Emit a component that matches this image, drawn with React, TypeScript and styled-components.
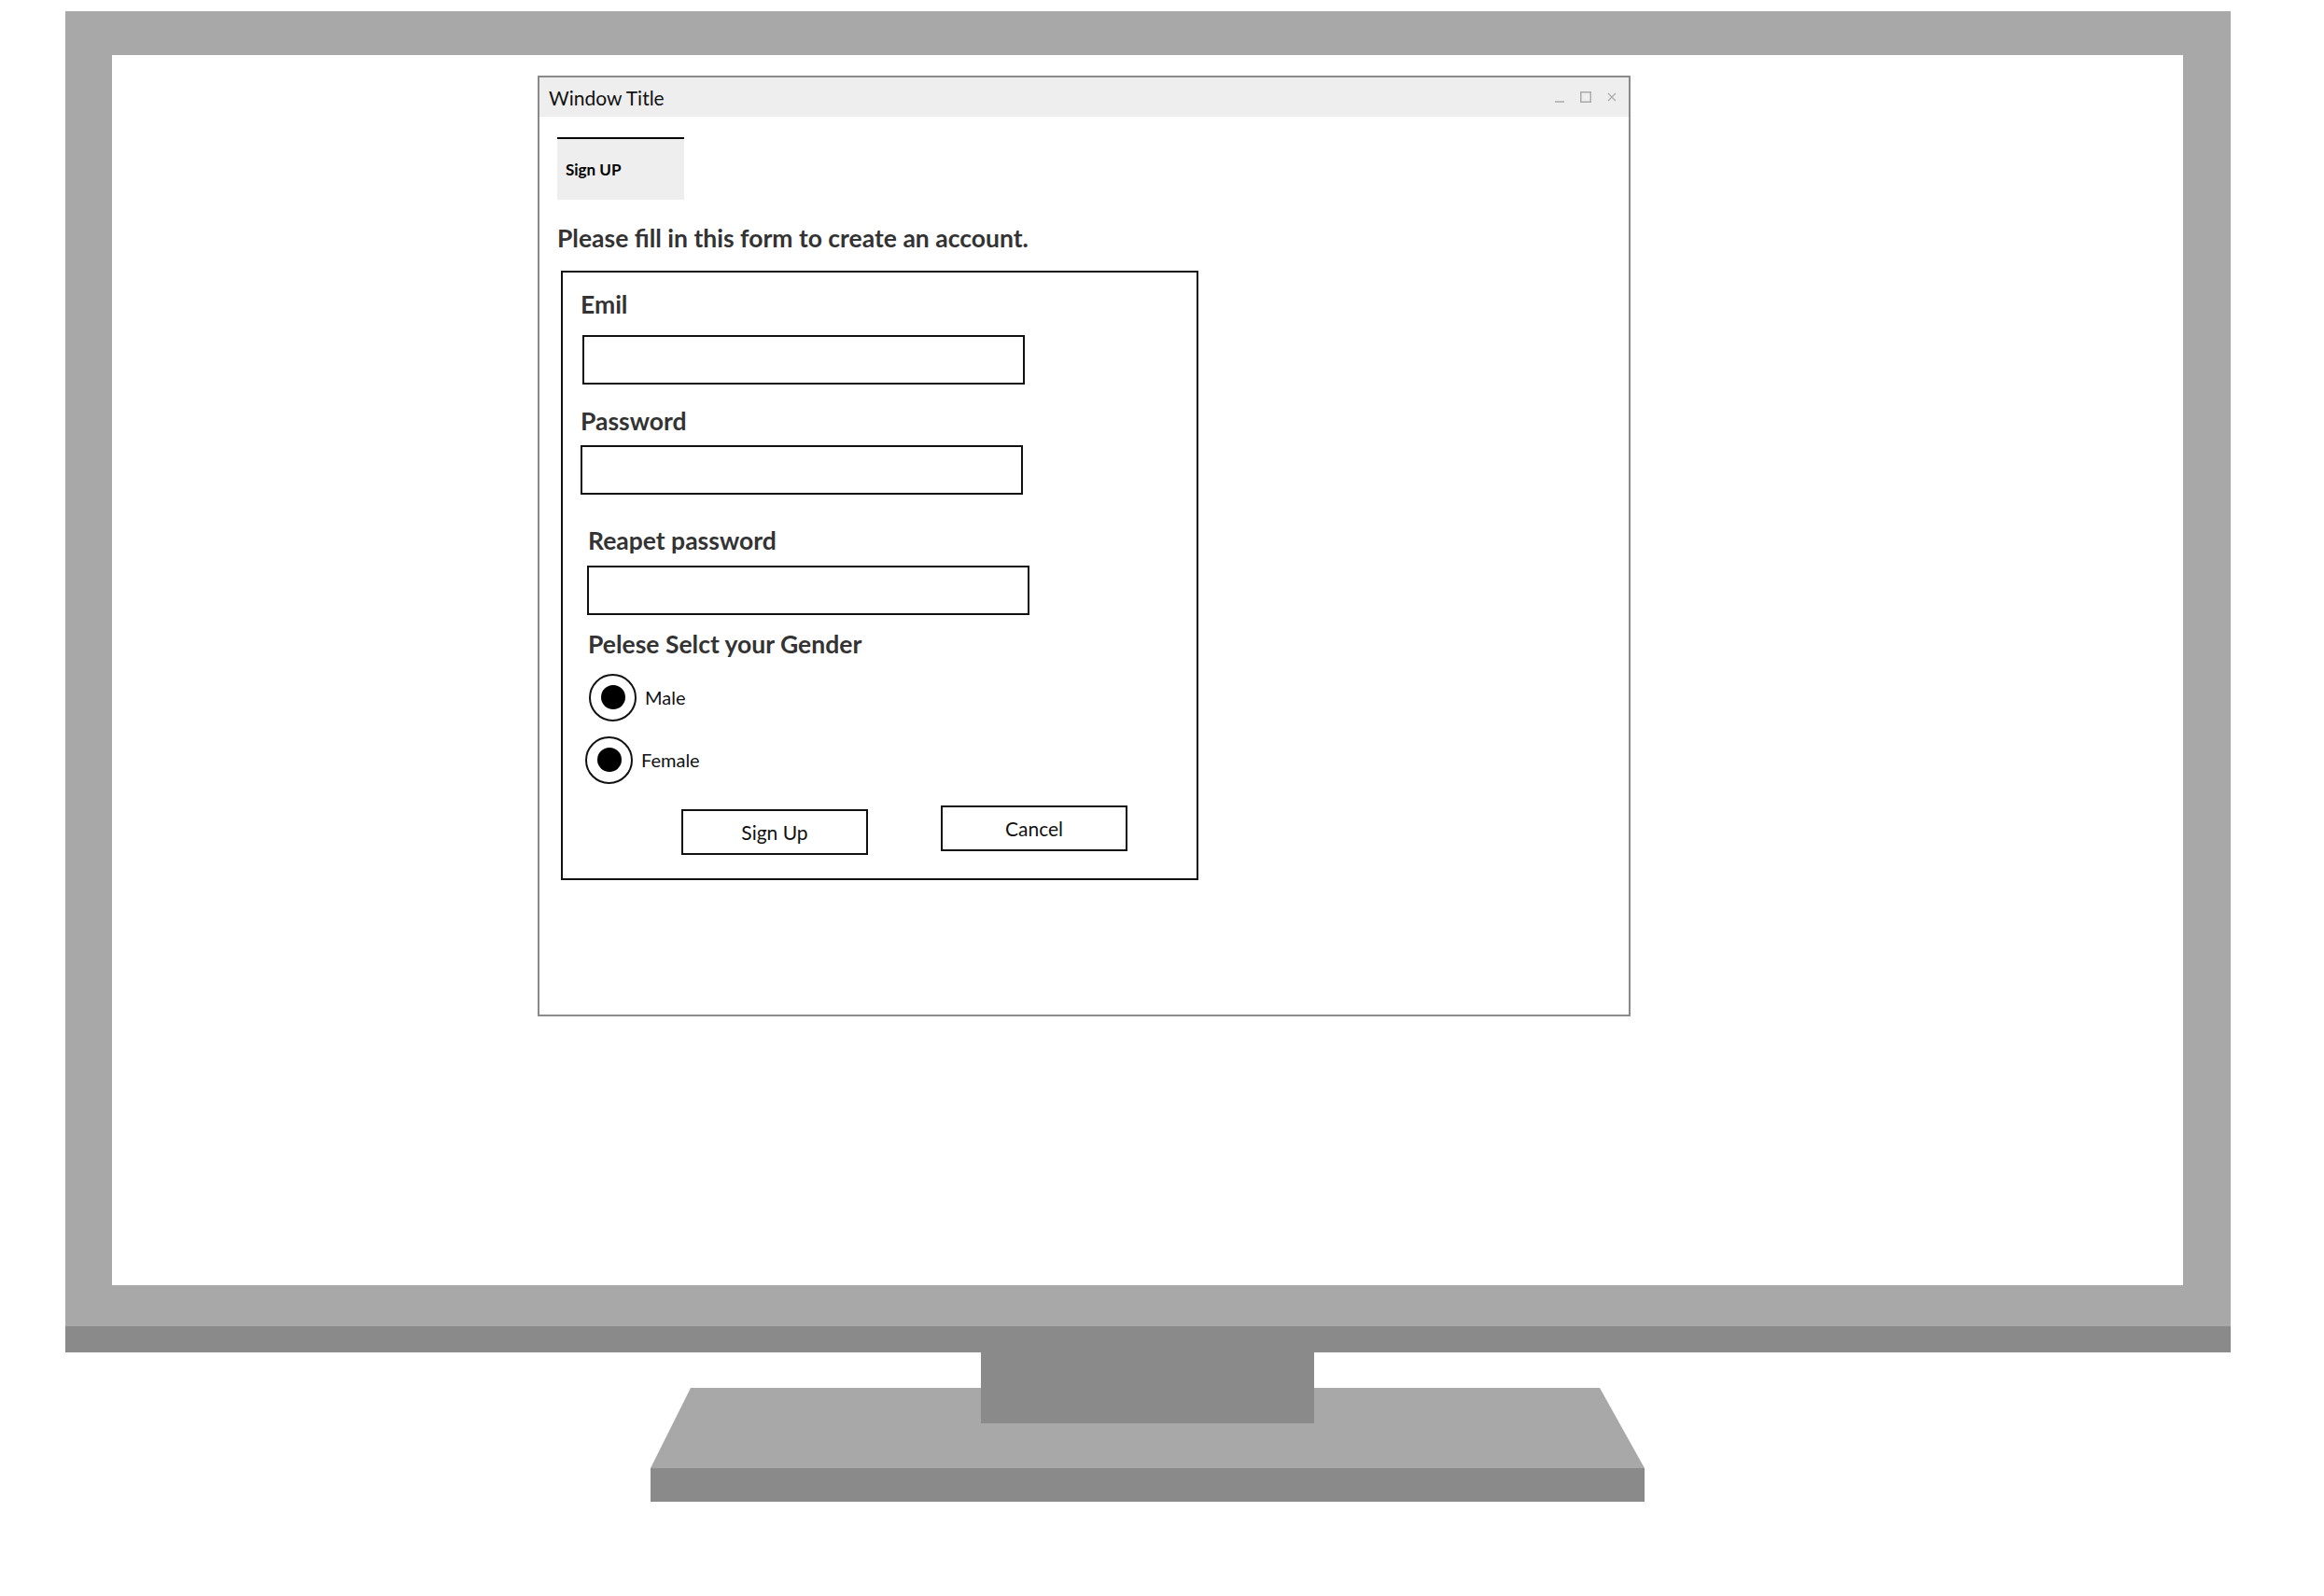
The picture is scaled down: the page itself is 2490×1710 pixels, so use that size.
import React from "react";
import styled, { createGlobalStyle } from "styled-components";

const GlobalStyle = createGlobalStyle`
  body {
    margin: 0;
    font-family: "Lato", "Liberation Sans", sans-serif;
    background: #fff;
  }
`;

const Page = styled.div`
  width: 2490px;
  height: 1710px;
  box-sizing: border-box;
  padding: 12px 0 0 70px;
  background: #fff;
`;

const Monitor = styled.div`
  width: 2320px;
  display: flex;
  flex-direction: column;
`;

const Bezel = styled.div`
  background: #a8a8a8;
  padding: 47px 51px 44px 50px;
`;

const Screen = styled.div`
  height: 1318px;
  box-sizing: border-box;
  padding: 22px 0 0 456px;
  background: #fff;
`;

const Chin = styled.div`
  height: 28px;
  background: #8a8a8a;
`;

const Stand = styled.svg`
  display: block;
  margin-left: 627px;
`;

const Window = styled.div`
  width: 1171px;
  height: 1008px;
  box-sizing: border-box;
  border: 2px solid #8a8a8a;
  display: flex;
  flex-direction: column;
  background: #fff;
`;

const TitleBar = styled.div`
  height: 42px;
  display: flex;
  align-items: center;
  justify-content: space-between;
  padding: 0 13px 0 10px;
  background: #eeeeee;
  font-size: 21px;
  color: #111;
`;

const Controls = styled.div`
  display: flex;
  align-items: center;
  gap: 17px;
`;

const Body = styled.div`
  padding: 22px 0 0 19px;
`;

const Tab = styled.div`
  width: 136px;
  height: 67px;
  box-sizing: border-box;
  border-top: 2px solid #000;
  background: #eeeeee;
  display: flex;
  align-items: center;
  padding-left: 9px;
  font-size: 17px;
  font-weight: 700;
  color: #000;
`;

const Heading = styled.h2`
  margin: 26px 0 0;
  font-size: 26.5px;
  font-weight: 700;
  color: #333;
  line-height: 1.2;
`;

const FormBox = styled.form`
  width: 683px;
  height: 653px;
  box-sizing: border-box;
  margin: 18px 0 0 4px;
  padding-top: 19px;
  border: 2px solid #111;
  display: flex;
  flex-direction: column;
  align-items: flex-start;
`;

const Label = styled.label<{ $indent: number; $top: number }>`
  display: block;
  margin: ${(p) => p.$top}px 0 0 ${(p) => p.$indent}px;
  font-size: 26.5px;
  font-weight: 700;
  color: #333;
  line-height: 1.2;
`;

const Input = styled.input<{ $indent: number; $top: number }>`
  display: block;
  width: 474px;
  height: 53px;
  box-sizing: border-box;
  margin: ${(p) => p.$top}px 0 0 ${(p) => p.$indent}px;
  border: 2px solid #111;
  background: #fff;
  outline: none;
`;

const RadioRow = styled.label<{ $indent: number; $top: number }>`
  display: flex;
  align-items: center;
  margin: ${(p) => p.$top}px 0 0 ${(p) => p.$indent}px;
  font-size: 20px;
  color: #111;
`;

const RadioCircle = styled.span`
  width: 51px;
  height: 51px;
  box-sizing: border-box;
  border: 2px solid #111;
  border-radius: 50%;
  display: flex;
  align-items: center;
  justify-content: center;
  margin-right: 9px;
`;

const Dot = styled.span`
  width: 26px;
  height: 26px;
  border-radius: 50%;
  background: #000;
`;

const ButtonRow = styled.div`
  display: flex;
  align-items: flex-start;
  gap: 78px;
  margin: 23px 0 0 127px;
`;

const Button = styled.button<{ $drop: number }>`
  width: 200px;
  height: 49px;
  margin-top: ${(p) => p.$drop}px;
  box-sizing: border-box;
  border: 2px solid #111;
  background: #fff;
  font-family: "Lato", "Liberation Sans", sans-serif;
  font-size: 21px;
  color: #111;
  padding: 0;
`;

const fields = [
  { label: "Emil", li: 19, lt: 0, ii: 21, it: 16 },
  { label: "Password", li: 19, lt: 24, ii: 19, it: 10 },
  { label: "Reapet password", li: 27, lt: 34, ii: 26, it: 10 },
];

const App = () => {
  return (
    <Page>
      <GlobalStyle />
      <Monitor>
        <Bezel>
          <Screen>
            <Window>
              <TitleBar>
                <span>Window Title</span>
                <Controls>
                  <svg width="10" height="12" viewBox="0 0 10 12">
                    <line x1="0" y1="11" x2="10" y2="11" stroke="#aaa" strokeWidth="1.5" />
                  </svg>
                  <svg width="12" height="12" viewBox="0 0 12 12">
                    <rect x="0.75" y="0.75" width="10.5" height="10.5" fill="none" stroke="#aaa" strokeWidth="1.5" />
                  </svg>
                  <svg width="10" height="10" viewBox="0 0 10 10">
                    <path d="M1 1 L9 9 M9 1 L1 9" stroke="#aaa" strokeWidth="1.2" />
                  </svg>
                </Controls>
              </TitleBar>
              <Body>
                <Tab>Sign UP</Tab>
                <Heading>Please fill in this form to create an account.</Heading>
                <FormBox>
                  {fields.map((f) => (
                    <React.Fragment key={f.label}>
                      <Label $indent={f.li} $top={f.lt}>{f.label}</Label>
                      <Input $indent={f.ii} $top={f.it} />
                    </React.Fragment>
                  ))}
                  <Label $indent={27} $top={16}>Pelese Selct your Gender</Label>
                  <RadioRow $indent={28} $top={15}>
                    <RadioCircle><Dot /></RadioCircle>
                    Male
                  </RadioRow>
                  <RadioRow $indent={24} $top={16}>
                    <RadioCircle><Dot /></RadioCircle>
                    Female
                  </RadioRow>
                  <ButtonRow>
                    <Button type="button" $drop={4}>Sign Up</Button>
                    <Button type="button" $drop={0}>Cancel</Button>
                  </ButtonRow>
                </FormBox>
              </Body>
            </Window>
          </Screen>
        </Bezel>
        <Chin />
        <Stand width="1065" height="160" viewBox="0 0 1065 160">
          <polygon points="43,38 1017,38 1065,124 0,124" fill="#a8a8a8" />
          <rect x="0" y="124" width="1065" height="36" fill="#8a8a8a" />
          <rect x="354" y="0" width="357" height="76" fill="#8a8a8a" />
        </Stand>
      </Monitor>
    </Page>
  );
};

export default App;
